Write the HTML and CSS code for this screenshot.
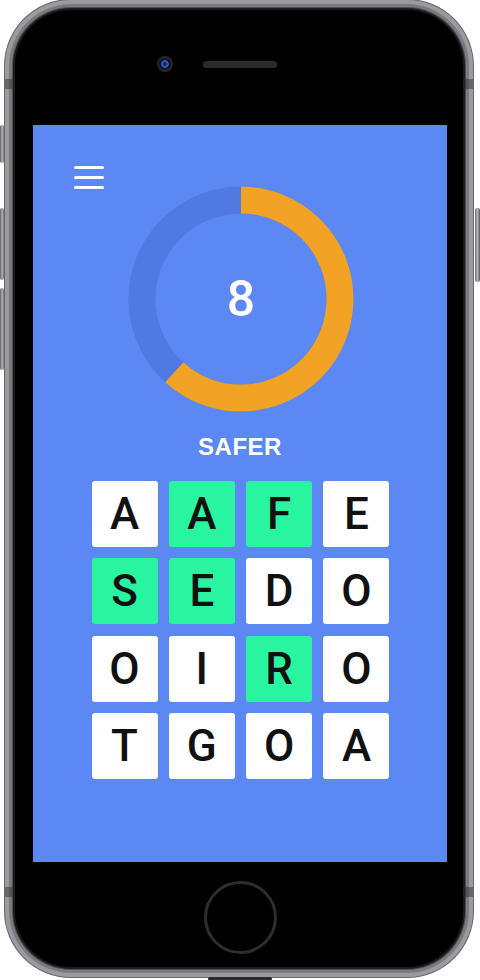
FILE: index.html
```html
<!DOCTYPE html>
<html lang="en">
<head>
<meta charset="utf-8">
<title>Word Game</title>
<link rel="stylesheet" href="styles.css">
</head>
<body>
<div class="phone">
  <span class="side-btn btn-mute"></span>
  <span class="side-btn btn-vol-up"></span>
  <span class="side-btn btn-vol-down"></span>
  <span class="side-btn btn-power"></span>
  <span class="band band-tl"></span>
  <span class="band band-tr"></span>
  <span class="band band-bl"></span>
  <span class="band band-br"></span>
  <span class="port"></span>

  <div class="top-bezel">
    <div class="sensors">
      <span class="camera"></span>
      <span class="speaker"></span>
      <span class="spacer"></span>
    </div>
  </div>

  <main class="screen">
    <header class="header">
      <button class="menu" aria-label="Menu"><span></span><span></span><span></span></button>
    </header>

    <div class="ring">
      <svg class="ring-svg" width="226" height="226" viewBox="0 0 226 226">
        <circle class="ring-track" cx="113" cy="113" r="99"></circle>
        <circle class="ring-progress" cx="113" cy="113" r="99" stroke-dasharray="383.6 622.04" transform="rotate(-90 113 113)"></circle>
      </svg>
      <span class="count">8</span>
    </div>

    <div class="word">SAFER</div>

    <div class="grid">
      <div class="tile">A</div>
      <div class="tile on">A</div>
      <div class="tile on">F</div>
      <div class="tile">E</div>
      <div class="tile on">S</div>
      <div class="tile on">E</div>
      <div class="tile">D</div>
      <div class="tile">O</div>
      <div class="tile">O</div>
      <div class="tile">I</div>
      <div class="tile on">R</div>
      <div class="tile">O</div>
      <div class="tile">T</div>
      <div class="tile">G</div>
      <div class="tile">O</div>
      <div class="tile">A</div>
    </div>
  </main>

  <div class="bottom-bezel">
    <div class="home"></div>
  </div>
</div>
</body>
</html>
```

FILE: styles.css
```css
html, body {
  margin: 0;
  padding: 0;
  background: #ffffff;
}

body {
  width: 480px;
  height: 980px;
  overflow: hidden;
}

.phone {
  position: relative;
  margin: 10px 0 0 15px;
  width: 448px;
  height: 957px;
  box-sizing: border-box;
  padding: 0 16px 0 18px;
  background: #000;
  border-radius: 56px;
  display: flex;
  flex-direction: column;
  box-shadow:
    0 0 0 2px #1b1b1e,
    0 0 0 3px #505055,
    0 0 0 6px #7a7a7f,
    0 0 0 10px #9a9a9f,
    0 0 0 11px #66666b;
}

/* side hardware */
.side-btn {
  position: absolute;
  border-radius: 2px;
  background: linear-gradient(to right, #56565a, #b8b8bc 50%, #6e6e72);
}
.btn-mute { left: -15px; top: 115px; width: 4px; height: 38px; }
.btn-vol-up { left: -15px; top: 198px; width: 4px; height: 72px; }
.btn-vol-down { left: -15px; top: 278px; width: 4px; height: 82px; }
.btn-power { left: 460px; top: 198px; width: 5px; height: 74px; background: linear-gradient(to right, #6e6e72, #b8b8bc 50%, #56565a); }

.band {
  position: absolute;
  width: 10px;
  height: 10px;
  background: rgba(40, 40, 44, 0.45);
}
.band-tl { left: -10px; top: 69px; }
.band-tr { left: 448px; top: 69px; }
.band-bl { left: -10px; top: 877px; }
.band-br { left: 448px; top: 877px; }

.port {
  position: absolute;
  left: 193px;
  top: 967px;
  width: 64px;
  height: 4px;
  border-radius: 2px;
  background: #2a2a2e;
}

/* top bezel */
.top-bezel {
  height: 115px;
  box-sizing: border-box;
  padding-top: 46px;
  display: flex;
  justify-content: center;
}

.sensors {
  display: flex;
  align-items: center;
  gap: 30px;
  height: 16px;
}

.camera {
  width: 16px;
  height: 16px;
  border-radius: 50%;
  background: radial-gradient(circle, #10245e 0 1.5px, #3553c4 2px 3.5px, #15151a 4px 6px, #26262b 6.5px 8px);
}

.speaker {
  width: 74px;
  height: 7px;
  border-radius: 4px;
  background: #2b2b2f;
}

.spacer {
  width: 16px;
  height: 16px;
}

/* screen */
.screen {
  height: 737px;
  box-sizing: border-box;
  padding-top: 41px;
  background: #5b88f2;
  display: flex;
  flex-direction: column;
  align-items: center;
}

.header {
  align-self: stretch;
  height: 20px;
  padding-left: 41px;
}

.menu {
  display: flex;
  flex-direction: column;
  gap: 7px;
  width: 30px;
  padding: 0;
  border: 0;
  background: none;
}
.menu span {
  display: block;
  width: 30px;
  height: 3px;
  border-radius: 2px;
  background: #ffffff;
}

.ring {
  width: 226px;
  height: 226px;
  margin-left: 2px;
  display: grid;
  place-items: center;
}

.ring-svg,
.count {
  grid-area: 1 / 1;
}

.ring-track {
  fill: none;
  stroke: #507ae1;
  stroke-width: 27;
}

.ring-progress {
  fill: none;
  stroke: #f2a225;
  stroke-width: 27;
}

.count {
  font-family: Roboto, "Liberation Sans", sans-serif;
  font-weight: 500;
  font-size: 50px;
  line-height: 1;
  color: #ffffff;
}

.word {
  margin-top: 21px;
  font-family: "Liberation Sans", Arial, sans-serif;
  font-weight: 700;
  font-size: 24px;
  line-height: 28px;
  letter-spacing: 0.5px;
  color: #ffffff;
}

.grid {
  margin-top: 20px;
  margin-left: 1px;
  display: grid;
  grid-template-columns: repeat(4, 66px);
  grid-auto-rows: 66px;
  gap: 11.33px;
}

.tile {
  display: flex;
  align-items: center;
  justify-content: center;
  border-radius: 3px;
  background: #ffffff;
  font-family: Roboto, "Liberation Sans", sans-serif;
  font-weight: 500;
  font-size: 44px;
  color: #111111;
}

.tile.on {
  background: #29f5a0;
}

/* bottom bezel */
.bottom-bezel {
  flex: 1;
  display: flex;
  justify-content: center;
  padding-top: 19px;
}

.home {
  width: 73px;
  height: 73px;
  box-sizing: border-box;
  border-radius: 50%;
  border: 3px solid #2c2c32;
}
```
